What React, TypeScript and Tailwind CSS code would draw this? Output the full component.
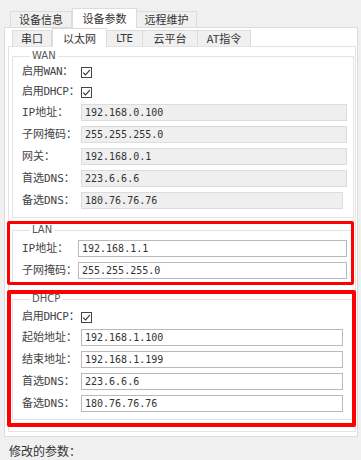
import React from "react";

const mono = "font-['DejaVu_Sans_Mono','Noto_Sans_CJK_SC',monospace]";
const cjk = "font-['Noto_Sans_CJK_SC','DejaVu_Sans',sans-serif]";

const CheckBox = () => (
    <div className="w-[11px] h-[11px] border border-[#444] bg-white flex items-center justify-center">
        <svg width="9" height="9" viewBox="0 0 9 9">
            <path d="M1.2 4.6 L3.5 6.9 L7.8 2.2" fill="none" stroke="#333" strokeWidth="1.1" />
        </svg>
    </div>
);

interface FieldProps {
    label: string;
    value: string;
    box: string;   // width + look of the edit box
    lw?: string;
}

const Field: React.FC<FieldProps> = ({ label, value, box, lw = "w-[59px]" }) => (
    <div className="flex items-center h-[17px]">
        <span className={`${lw} shrink-0 whitespace-nowrap text-[11px] leading-[17px] text-[#444] ${mono}`}>{label}</span>
        <div className={`h-[17px] border pl-[3px] text-[10px] leading-[15px] text-[#333] ${mono} ${box}`}>
            {value}
        </div>
    </div>
);

const CheckRow = ({ label, h = "h-[20px]" }: { label: string; h?: string }) => (
    <div className={`flex items-center ${h}`}>
        <span className={`w-[59px] shrink-0 whitespace-nowrap text-[11px] tracking-[-0.3px] text-[#444] ${mono}`}>{label}</span>
        <CheckBox />
    </div>
);

const Legend = ({ text }: { text: string }) => (
    <legend className="ml-[8px] px-[2px] text-[10px] leading-[12px] text-[#555] font-['DejaVu_Sans',sans-serif]">
        {text}
    </legend>
);

const off = "bg-[#efefef] border-[#dcdcdc]";
const on = "bg-white border-[#b9b9b9]";

export default function App() {
    return (
        <div className={`relative w-[361px] h-[460px] bg-[#f0f0f0] overflow-hidden pt-[8px] ${cjk}`}>
            {/* outer tabs */}
            <div className="flex items-end h-[19px] pl-[10px] text-[11px] text-[#333]">
                <div className="w-[62px] h-[16px] border border-b-0 border-[#dcdcdc] bg-[#f0f0f0] flex items-center justify-center">设备信息</div>
                <div className="relative z-10 w-[65px] h-[20px] -mb-px border border-b-0 border-[#dcdcdc] bg-white flex items-center justify-center">设备参数</div>
                <div className="w-[60px] h-[16px] border border-b-0 border-l-0 border-[#dcdcdc] bg-[#f0f0f0] flex items-center justify-center">远程维护</div>
            </div>

            {/* outer panel */}
            <div className="ml-[4px] w-[354px] h-[410px] bg-white border border-[#dcdcdc]">
                {/* inner tabs */}
                <div className="flex items-end h-[18px] pl-[7px] text-[11px] text-[#333]">
                    <div className="w-[40px] h-[16px] border border-b-0 border-[#dcdcdc] bg-[#f0f0f0] flex items-center justify-center">串口</div>
                    <div className="relative z-10 w-[55px] h-[19px] -mb-px border border-b-0 border-[#dcdcdc] bg-white flex items-center justify-center">以太网</div>
                    <div className="w-[36px] h-[16px] border border-b-0 border-l-0 border-[#dcdcdc] bg-[#f0f0f0] flex items-center justify-center font-['DejaVu_Sans',sans-serif] text-[10px]">LTE</div>
                    <div className="w-[55px] h-[16px] border border-b-0 border-l-0 border-[#dcdcdc] bg-[#f0f0f0] flex items-center justify-center">云平台</div>
                    <div className="w-[53px] h-[16px] border border-b-0 border-l-0 border-[#dcdcdc] bg-[#f0f0f0] flex items-center justify-center">AT指令</div>
                </div>

                {/* inner page */}
                <div className="ml-[3px] w-[348px] h-[386px] border border-[#e3e3e3] bg-white">
                    <fieldset className="ml-[3px] mt-[3px] w-[342px] border border-[#e3e3e3] pl-[9px] pb-[8px]">
                        <Legend text="WAN" />
                        <CheckRow label="启用WAN：" />
                        <CheckRow label="启用DHCP：" />
                        <div className="flex flex-col gap-[5px] mt-[2px]">
                            <Field label="IP地址：" value="192.168.0.100" box={`w-[266px] ${off}`} />
                            <Field label="子网掩码：" value="255.255.255.0" box={`w-[266px] ${off}`} />
                            <Field label="网关：" value="192.168.0.1" box={`w-[266px] ${off}`} />
                            <Field label="首选DNS：" value="223.6.6.6" box={`w-[266px] ${off}`} />
                            <Field label="备选DNS：" value="180.76.76.76" box={`w-[262px] ${off}`} />
                        </div>
                    </fieldset>

                    <fieldset className="ml-[3px] mt-[6px] w-[342px] border border-[#e3e3e3] pl-[9px] pb-[3px]">
                        <Legend text="LAN" />
                        <div className="flex flex-col gap-[5px] mt-[4px]">
                            <Field label="IP地址：" value="192.168.1.1" lw="w-[56px]" box={`w-[269px] ${on}`} />
                            <Field label="子网掩码：" value="255.255.255.0" lw="w-[56px]" box={`w-[269px] ${on}`} />
                        </div>
                    </fieldset>

                    <fieldset className="ml-[3px] mt-[10px] w-[342px] border border-[#e3e3e3] pl-[9px] pb-[7px]">
                        <Legend text="DHCP" />
                        <CheckRow label="启用DHCP：" h="h-[24px]" />
                        <div className="flex flex-col gap-[5px]">
                            <Field label="起始地址：" value="192.168.1.100" box={`w-[262px] ${on}`} />
                            <Field label="结束地址：" value="192.168.1.199" box={`w-[262px] ${on}`} />
                            <Field label="首选DNS：" value="223.6.6.6" box={`w-[262px] ${on}`} />
                            <Field label="备选DNS：" value="180.76.76.76" box={`w-[262px] ${on}`} />
                        </div>
                    </fieldset>
                </div>
            </div>

            <div className="pl-[9px] mt-[7px] text-[12px] leading-[14px] text-[#333]">修改的参数：</div>

            {/* red annotation boxes drawn over the form */}
            <div className="absolute left-[7px] top-[221px] w-[347px] h-[64px] border-[3px] border-[#ff0000] rounded-[2px] pointer-events-none" />
            <div className="absolute left-[7px] top-[290px] w-[349px] h-[137px] border-[4px] border-[#ff0000] rounded-[2px] pointer-events-none" />
        </div>
    );
}
